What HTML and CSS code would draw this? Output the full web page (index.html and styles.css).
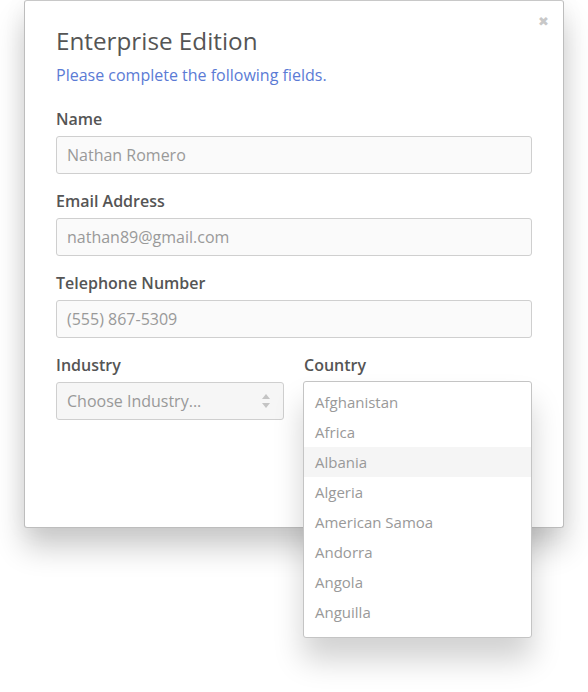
FILE: index.html
```html
<!DOCTYPE html>
<html>
<head>
<meta charset="utf-8">
<link rel="stylesheet" href="styles.css">
</head>
<body>
<div class="modal">
  <span class="close">&#x2716;</span>
  <h1 class="title">Enterprise Edition</h1>
  <p class="subtitle">Please complete the following fields.</p>
  <div class="field">
    <div class="label">Name</div>
    <div class="input">Nathan Romero</div>
  </div>
  <div class="field">
    <div class="label">Email Address</div>
    <div class="input">nathan89@gmail.com</div>
  </div>
  <div class="field">
    <div class="label">Telephone Number</div>
    <div class="input">(555) 867-5309</div>
  </div>
  <div class="row">
    <div class="col">
      <div class="label">Industry</div>
      <div class="input select">
        <span>Choose Industry...</span>
        <svg class="arrows" width="8" height="14" viewBox="0 0 8 14"><path d="M4 0 L8 5 H0 Z M4 14 L8 9 H0 Z" fill="#c4c4c4"/></svg>
      </div>
    </div>
    <div class="col country">
      <div class="label">Country</div>
      <ul class="dropdown">
        <li>Afghanistan</li>
        <li>Africa</li>
        <li class="active">Albania</li>
        <li>Algeria</li>
        <li>American Samoa</li>
        <li>Andorra</li>
        <li>Angola</li>
        <li>Anguilla</li>
      </ul>
    </div>
  </div>
</div>
</body>
</html>
```
FILE: styles.css
```css
html, body {
  margin: 0;
  padding: 0;
  background: #fff;
}
html {
  min-height: 692px;
}
body {
  font-family: "Open Sans", Lato, sans-serif;
  color: #555;
  padding: 0 24px;
  min-height: 692px;
  box-sizing: border-box;
}
.modal {
  position: relative;
  box-sizing: border-box;
  width: 540px;
  height: 528px;
  border: 1px solid #bdbdbd;
  border-top-color: #c8c8c8;
  border-radius: 3px;
  background: #fff;
  padding: 24px 31px 0;
  box-shadow: 0 20px 30px rgba(0, 0, 0, 0.2), 0 2px 24px rgba(0, 0, 0, 0.05);
}
.close {
  position: absolute;
  right: 14px;
  top: 11px;
  font-size: 13px;
  color: #c8c8c8;
}
.title {
  margin: 0;
  font-size: 24.25px;
  font-weight: 400;
  line-height: 32px;
  color: #555;
}
.subtitle {
  margin: 8px 0 0;
  font-size: 16px;
  line-height: 20px;
  color: #5b7bd5;
}
.field {
  margin-top: 24px;
}
.field + .field {
  margin-top: 17px;
}
.row {
  display: flex;
  gap: 20px;
  margin-top: 17px;
}
.col {
  flex: 1;
  position: relative;
}
.label {
  font-size: 16px;
  font-weight: 600;
  line-height: 20px;
  color: #555;
  margin-bottom: 7px;
}
.input {
  box-sizing: border-box;
  height: 38px;
  border: 1px solid #cfcfcf;
  border-radius: 3px;
  background: #fafafa;
  padding: 0 10px;
  font-size: 16px;
  line-height: 36px;
  color: #999;
}
.select {
  display: flex;
  justify-content: space-between;
  align-items: center;
  background: #f6f6f6;
}
.arrows {
  margin-right: 3px;
}
.dropdown {
  position: absolute;
  left: -1px;
  top: 26px;
  width: 229px;
  box-sizing: border-box;
  margin: 0;
  padding: 5px 0 10px;
  list-style: none;
  background: #fff;
  border: 1px solid #c4c4c4;
  border-radius: 3px;
  box-shadow: 0 22px 30px rgba(0, 0, 0, 0.18);
}
.dropdown li {
  height: 30px;
  line-height: 30px;
  padding: 0 11px;
  font-size: 15px;
  color: #999;
}
.dropdown li.active {
  background: #f5f5f5;
}
```
